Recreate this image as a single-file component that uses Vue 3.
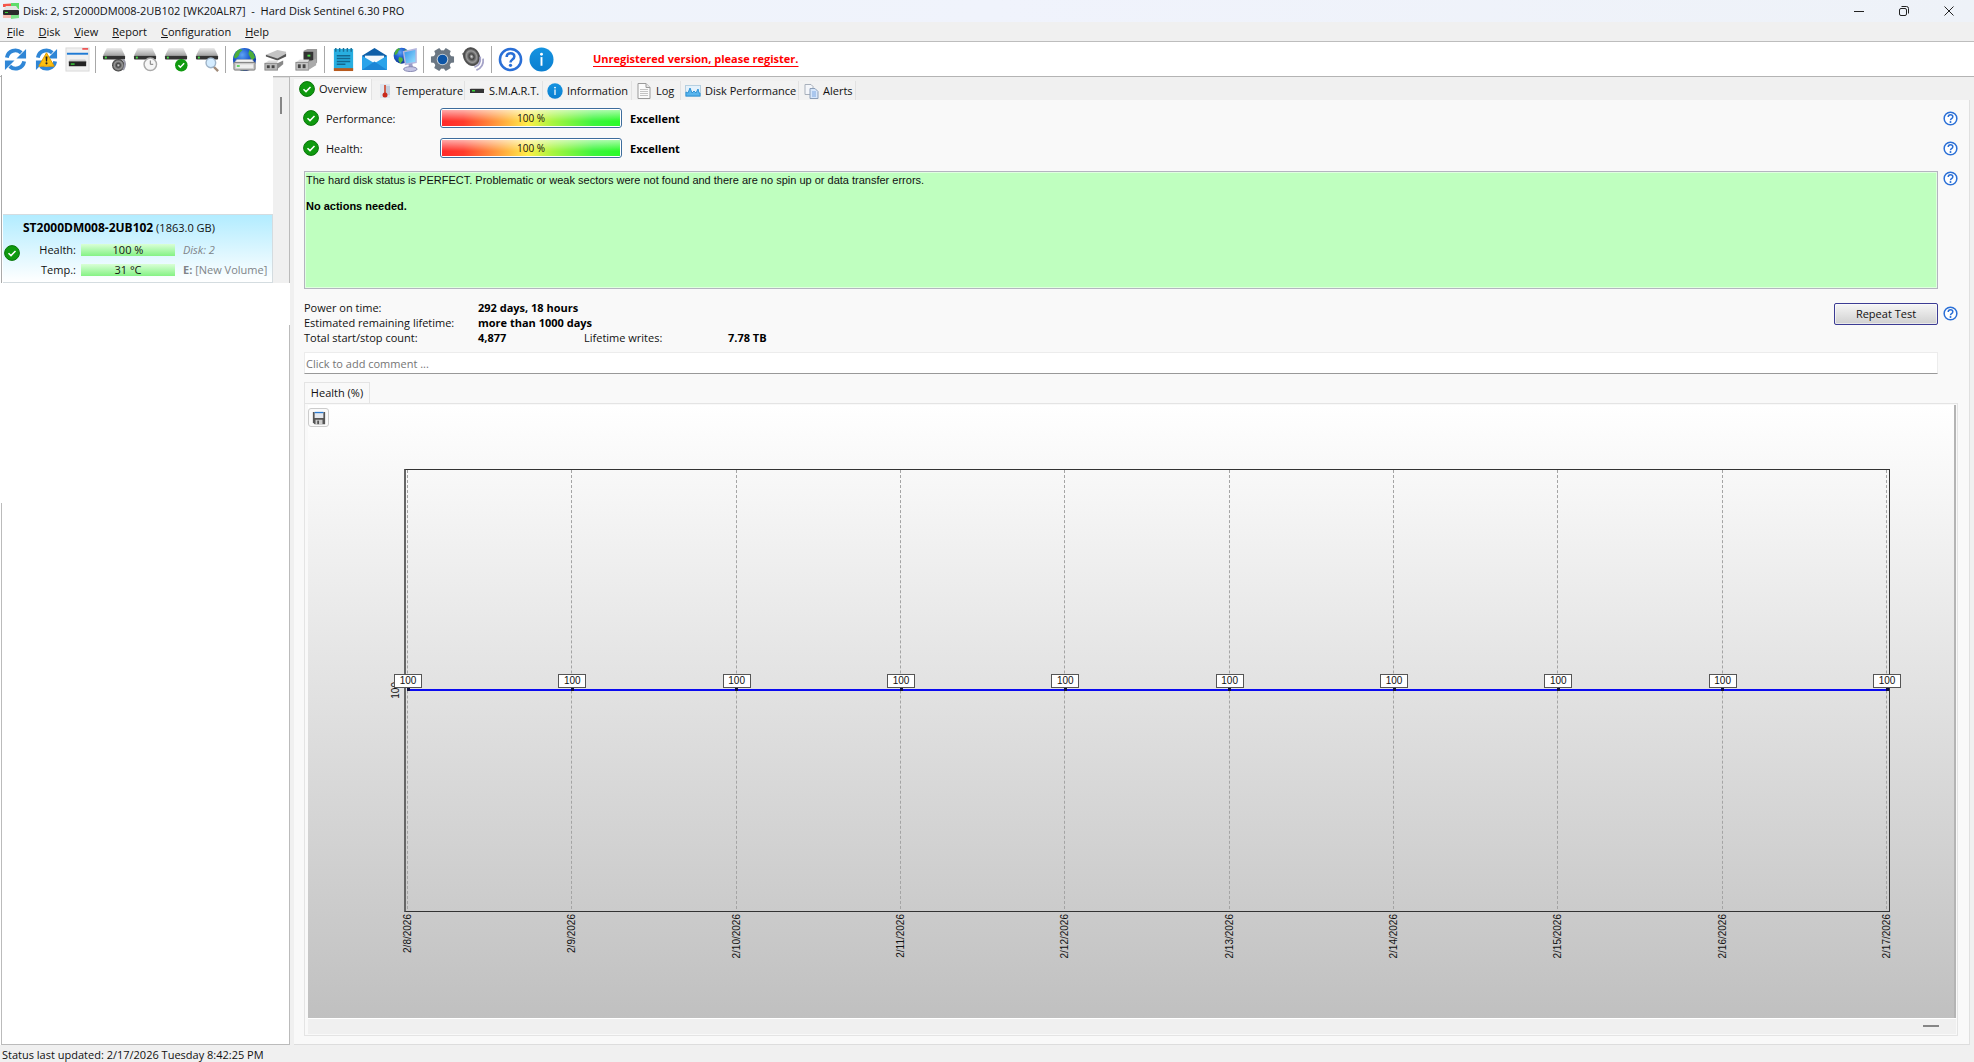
<script setup>
import { ref } from 'vue'

const menus = ['File', 'Disk', 'View', 'Report', 'Configuration', 'Help']

const toolGroups = [
  [['refresh', 'Refresh'], ['refresh-warn', 'Refresh all'], ['panel', 'Disk panel']],
  [['disk-sound', 'Acoustic'], ['disk-clock', 'Short test'], ['disk-ok', 'Extended test'], ['disk-find', 'Surface test']],
  [['disk-web', 'Online'], ['plug', 'Connect'], ['plug-disk', 'Remove']],
  [['notes', 'Report'], ['mail', 'Send'], ['network', 'Network']],
  [['gear', 'Configuration'], ['speaker', 'Sounds']],
  [['help', 'Help'], ['info', 'About']],
]

const tabs = [
  { icon: 'ok', label: 'Overview' },
  { icon: 'thermo', label: 'Temperature' },
  { icon: 'drive', label: 'S.M.A.R.T.' },
  { icon: 'info', label: 'Information' },
  { icon: 'page', label: 'Log' },
  { icon: 'graph', label: 'Disk Performance' },
  { icon: 'pages', label: 'Alerts' },
]
const activeTab = ref('Overview')

const ratings = ['Performance:', 'Health:']
const comment = ref('')

const firstDay = 8
const points = Array.from({ length: 10 }, (_, i) => ({
  date: `2/${firstDay + i}/2026`,
  value: 100,
  left: (i / 9) * 100 + '%',
}))
</script>

<template>
  <svg class="defs" aria-hidden="true">
    <defs>
      <linearGradient id="gDrive" x1="0" y1="0" x2="0" y2="1">
        <stop offset="0" stop-color="#ececec" /><stop offset="1" stop-color="#a2a2a2" />
      </linearGradient>
      <linearGradient id="gBlue" x1="0" y1="0" x2="0" y2="1">
        <stop offset="0" stop-color="#1593e0" /><stop offset="1" stop-color="#0b7fd0" />
      </linearGradient>
      <radialGradient id="gGlobe" cx=".4" cy=".3" r=".8">
        <stop offset="0" stop-color="#5fa4f4" /><stop offset=".4" stop-color="#1f5fd0" /><stop offset="1" stop-color="#0c2f86" />
      </radialGradient>
      <linearGradient id="gScreen" x1="0" y1="0" x2="1" y2="1">
        <stop offset="0" stop-color="#2f8fe8" /><stop offset="1" stop-color="#9be4ff" />
      </linearGradient>
      <radialGradient id="gCone">
        <stop offset="0" stop-color="#ddd" /><stop offset=".3" stop-color="#444" /><stop offset=".65" stop-color="#999" /><stop offset="1" stop-color="#2b2b2b" />
      </radialGradient>
    </defs>

    <symbol id="i-app" viewBox="0 0 16 16">
      <path d="M0 1l16-1v4H0z" fill="#f4564a" /><path d="M8 0h8v6H8z" fill="#5fdc6a" />
      <path d="M0 12h9l-1 3H0z" fill="#f9b9b0" /><path d="M8 12h8v3l-8 1z" fill="#7fe58a" />
      <path d="M3 3h10l3 4H0z" fill="#e4e4e4" /><rect y="7" width="16" height="5" rx="1" fill="#2b2b2b" />
      <rect x="2" y="9" width="3" height="1" fill="#3ad23a" />
    </symbol>
    <symbol id="i-arrows" viewBox="0 0 26 26">
      <g fill="none" stroke="#2f86d6" stroke-width="4">
        <path d="M4 11a9 9 0 0 1 15-5" /><path d="M22 15a9 9 0 0 1-15 5" />
      </g>
      <path d="M24 2v10H14z" fill="#2f86d6" /><path d="M2 24V14h10z" fill="#2f86d6" />
    </symbol>
    <symbol id="i-refresh" viewBox="0 0 26 26"><use href="#i-arrows" /></symbol>
    <symbol id="i-refresh-warn" viewBox="0 0 26 26">
      <use href="#i-arrows" />
      <path d="M13 6l8 14H5z" fill="#fdc00f" stroke="#e39a00" stroke-linejoin="round" />
      <path d="M12 10h2l-.4 5h-1.2z" fill="#222" /><circle cx="13" cy="17" r="1.1" fill="#222" />
    </symbol>
    <symbol id="i-panel" viewBox="0 0 26 26">
      <rect x="1" y="1" width="24" height="24" fill="#f0f0f0" stroke="#d8d8d8" />
      <path d="M18 2h6" stroke="#e33" stroke-width="1.5" /><rect x="2" y="6" width="22" height="2" fill="#1e7ad4" />
      <path d="M5 13h16l2 3H3z" fill="#ccc" /><rect x="4" y="15" width="18" height="5" fill="#222" />
      <rect x="6" y="17" width="4" height="1.500" fill="#3ad23a" />
    </symbol>
    <symbol id="i-hdd" viewBox="0 0 26 26">
      <path d="M5 1h15l4 8H1z" fill="url(#gDrive)" /><rect x="1" y="9" width="23" height="4" rx="1" fill="#333" />
      <rect x="3" y="10" width="2" height="2" fill="#4be04b" />
    </symbol>
    <symbol id="i-disk-sound" viewBox="0 0 26 26">
      <use href="#i-hdd" width="26" height="26" /><circle cx="17" cy="19" r="6.500" fill="url(#gCone)" /><path d="M22 13q4 4 0 11" stroke="#999aa8" stroke-width="2" fill="none" />
    </symbol>
    <symbol id="i-disk-clock" viewBox="0 0 26 26">
      <use href="#i-hdd" width="26" height="26" /><circle cx="18" cy="18" r="6.500" fill="#f6f6f6" stroke="#aaa" stroke-width="1.500" /><path d="M18 14v4h3" stroke="#777" fill="none" />
    </symbol>
    <symbol id="i-disk-ok" viewBox="0 0 26 26">
      <use href="#i-hdd" width="26" height="26" /><circle cx="18" cy="19" r="6.500" fill="#109a10" /><path d="M15 19l2 2 4-4" stroke="#fff" stroke-width="1.500" fill="none" />
    </symbol>
    <symbol id="i-disk-find" viewBox="0 0 26 26">
      <use href="#i-hdd" width="26" height="26" /><path d="M19 20l5 5" stroke="#a08a78" stroke-width="2.500" /><circle cx="16.500" cy="16.500" r="5" fill="#d4ecff" stroke="#9fb4c8" stroke-width="1.500" />
    </symbol>
    <symbol id="i-globe" viewBox="0 0 26 26">
      <circle cx="13" cy="13" r="12" fill="url(#gGlobe)" />
      <path d="M3 7q2-4 5-5l3 1-3 3-1 3-3 3-2-1zM18 3l4 3 2 5-3 3-2-3-2-4z" fill="#4cae3a" /><path d="M9 15l5 1 1 4-4 5-3-5z" fill="#58b83c" />
    </symbol>
    <symbol id="i-disk-web" viewBox="0 0 26 26">
      <use href="#i-globe" width="26" height="26" /><path d="M5 13h16l3 4H2z" fill="#f2f2f2" stroke="#aaa" stroke-width=".5" /><rect x="2" y="16" width="22" height="8" rx="1" fill="#c8c8c8" stroke="#777" />
      <rect x="4" y="18" width="18" height="4" fill="#eee" /><rect x="5" y="19" width="3" height="1.500" fill="#3c3" />
    </symbol>
    <symbol id="i-plug" viewBox="0 0 26 26">
      <path d="M3 8l12-5 9 2v4l-9 4z" fill="#c4c4c4" /><path d="M3 8l12 4 9-5v3l-9 4-12-4z" fill="#555" />
      <path d="M2 17l4-3h10l-2 3z" fill="#ddd" /><rect x="2" y="17" width="13" height="7" fill="#bbb" stroke="#888" />
      <rect x="4" y="19" width="3" height="3" fill="#444" /><rect x="9" y="19" width="3" height="3" fill="#444" /><path d="M15 17l6-3v4l-6 5z" fill="#888" />
    </symbol>
    <symbol id="i-plug-disk" viewBox="0 0 26 26">
      <path d="M10 4l4-2h10v14l-4 4H10z" fill="#9a9a9a" /><rect x="10" y="5" width="10" height="9" fill="#333" /><rect x="14" y="8" width="3" height="2" fill="#4be04b" />
      <path d="M2 16l4-3h10l-2 3z" fill="#ddd" /><rect x="2" y="16" width="13" height="8" fill="#c4c4c4" stroke="#888" />
      <rect x="4" y="18" width="3" height="4" fill="#444" /><rect x="9" y="18" width="3" height="4" fill="#444" /><path d="M15 16l8-4v7l-8 5z" fill="#aaa" />
    </symbol>
    <symbol id="i-notes" viewBox="0 0 26 26">
      <rect x="3" y="2" width="20" height="22" fill="#28aee0" /><rect x="3" y="22" width="20" height="3" fill="#b85a1e" />
      <path d="M5 1v4M9 1v4M13 1v4M17 1v4M21 1v4" stroke="#1b6f96" stroke-width="1.500" />
      <path d="M6 9h14M6 12h14M6 15h14M6 18h9" stroke="#13678f" stroke-width="1.500" />
    </symbol>
    <symbol id="i-mail" viewBox="0 0 26 26">
      <path d="M0 9l13-8 13 8v3H0z" fill="#0f5fa8" /><path d="M3 9h20v8H3z" fill="#f3f8fc" />
      <path d="M0 9l13 8 13-8v15H0z" fill="#2aa3ea" /><path d="M0 24l13-9 13 9z" fill="#1b86d6" />
    </symbol>
    <symbol id="i-network" viewBox="0 0 26 26">
      <use href="#i-globe" width="18" height="18" />
      <path d="M11 5l13-3v14l-11 2z" fill="url(#gScreen)" stroke="#b4b6de" stroke-width="1.500" />
      <path d="M16 18l4-1 1 5-4 1z" fill="#9a9cc8" /><ellipse cx="18" cy="23" rx="7" ry="2.500" fill="#c4c4e4" stroke="#8486b0" />
    </symbol>
    <symbol id="i-gear" viewBox="0 0 26 26">
      <g fill="#6b7783"><circle cx="13" cy="13" r="9.500" />
        <g v-for="a in [30, 90, 150, 210, 270, 330]" :key="a"><path :transform="`rotate(${a} 13 13)`" d="M10 1h6l1 6H9z" /></g>
      </g>
      <circle cx="13" cy="13" r="6" fill="#c8d2da" /><circle cx="13" cy="13" r="5" fill="#0d55a6" />
    </symbol>
    <symbol id="i-speaker" viewBox="0 0 26 26">
      <path d="M1 7l8-6 4 12-8 1z" fill="#777" /><ellipse cx="11" cy="10" rx="8" ry="9.500" fill="url(#gCone)" stroke="#555" transform="rotate(-25 11 10)" />
      <path d="M14 21q7-2 6-11M16 24q8-3 7-12" stroke="#a5a3c8" stroke-width="1.800" fill="none" />
    </symbol>
    <symbol id="i-help" viewBox="0 0 26 26">
      <circle cx="13" cy="13" r="11" fill="#fff" stroke="#2a6fd6" stroke-width="2.600" />
      <path d="M9 10.500q0-4 4-4t4 3.500q0 2-2.200 3.200Q13 14.300 13 16" stroke="#2a6fd6" stroke-width="2.600" fill="none" /><circle cx="13" cy="19" r="1.700" fill="#2a6fd6" />
    </symbol>
    <symbol id="i-info" viewBox="0 0 26 26">
      <circle cx="13" cy="13" r="12.500" fill="url(#gBlue)" /><rect x="12" y="10.500" width="2" height="9" fill="#fff" /><circle cx="13" cy="7.500" r="1.500" fill="#fff" />
    </symbol>
    <symbol id="i-ok" viewBox="0 0 16 16">
      <circle cx="8" cy="8" r="7.400" fill="#0f9a0f" stroke="#0a750a" /><path d="M4.500 8.200l2.500 2.400 4.500-4.600" stroke="#fff" stroke-width="1.500" fill="none" />
    </symbol>
    <symbol id="i-thermo" viewBox="0 0 16 16">
      <rect x="4" y="1" width="10" height="14" fill="#dfe5ee" /><path d="M11 3v9M13 3v9" stroke="#a7b6cc" />
      <rect x="8" y="2" width="2" height="10" fill="#d0604c" /><circle cx="9" cy="12" r="2.500" fill="#c8281c" />
    </symbol>
    <symbol id="i-drive" viewBox="0 0 16 16">
      <path d="M2 5h12l2 2H0z" fill="#c4c4c4" /><rect x="1" y="6" width="14" height="4" fill="#333" /><rect x="3" y="7" width="3" height="1.500" fill="#3ad23a" />
    </symbol>
    <symbol id="i-page" viewBox="0 0 16 16">
      <path d="M2 .5h8l4 4v11H2z" fill="#fbfbfb" stroke="#9a9a9a" /><path d="M10 .5v4h4" fill="#e4e4e4" stroke="#9a9a9a" />
      <path d="M4 6.500h8M4 8.500h8M4 10.500h8M4 12.500h8" stroke="#c4c4c4" />
    </symbol>
    <symbol id="i-graph" viewBox="0 0 16 16">
      <rect x=".5" y="2.500" width="15" height="11" fill="#e4f1fb" stroke="#b5cfe0" />
      <path d="M1 13V9l2 1 2-5 2 5 2-2 2 2 2-4 1 4 1 0v3z" fill="#58b4ec" stroke="#2f93d6" />
    </symbol>
    <symbol id="i-pages" viewBox="0 0 16 16">
      <path d="M2 1.500h6l2 2v8H2z" fill="#f4f6fa" stroke="#a8b0bb" /><path d="M7 5.500h5l3 3v7H7z" fill="#d6e6fb" stroke="#8c9fb8" /><path d="M9 9h4M9 11h4M9 13h4" stroke="#7fa8e0" />
    </symbol>
    <symbol id="i-save" viewBox="0 0 16 16">
      <path d="M1 1h14v14H3l-2-2z" fill="#555" /><rect x="3" y="1" width="10" height="7" fill="#e4e8ee" /><rect x="3" y="1" width="10" height="1.500" fill="#2a7ad0" />
      <rect x="4" y="10" width="8" height="5" fill="#ccc" /><rect x="6" y="11" width="2" height="4" fill="#555" />
    </symbol>
  </svg>

  <div class="window">
    <header class="titlebar">
      <svg class="app-icon"><use href="#i-app" /></svg>
      <h1>Disk: 2, ST2000DM008-2UB102 [WK20ALR7]&nbsp; -&nbsp; Hard Disk Sentinel 6.30 PRO</h1>
      <button aria-label="Minimize"><svg viewBox="0 0 10 10"><path d="M0 5.500h10" /></svg></button>
      <button aria-label="Restore"><svg viewBox="0 0 10 10"><rect x=".5" y="2.500" width="7" height="7" rx="1.500" /><path d="M2.500 .5h5a2 2 0 0 1 2 2v5" /></svg></button>
      <button aria-label="Close"><svg viewBox="0 0 10 10"><path d="M.5 .5l9 9M9.500 .5l-9 9" /></svg></button>
    </header>

    <nav class="menubar">
      <button v-for="m in menus" :key="m"><u>{{ m[0] }}</u>{{ m.slice(1) }}</button>
    </nav>

    <div class="toolbar">
      <div v-for="(group, g) in toolGroups" :key="g" class="group">
        <button v-for="[icon, label] in group" :key="icon" :aria-label="label"><svg><use :href="`#i-${icon}`" /></svg></button>
      </div>
      <a class="register" href="#register">Unregistered version, please register.</a>
    </div>

    <div class="body">
      <aside class="sidebar">
        <div class="scroller">
          <div class="drives">
            <div class="drive">
              <svg class="i16"><use href="#i-ok" /></svg>
              <div class="drive-name"><b>ST2000DM008-2UB102</b> (1863.0 GB)</div>
              <span class="key">Health:</span><span class="meter">100 %</span><i>Disk: 2</i>
              <span class="key">Temp.:</span><span class="meter">31 °C</span><span class="volume"><b>E:</b> [New Volume]</span>
            </div>
          </div>
          <div class="track"><div class="thumb"></div></div>
        </div>
        <div class="gap"></div>
        <div class="blank"></div>
        <div class="empty"></div>
      </aside>

      <main>
        <div class="tabs" role="tablist">
          <button v-for="t in tabs" :key="t.label" role="tab" :class="{ active: t.label === activeTab }" @click="activeTab = t.label">
            <svg class="i16"><use :href="`#i-${t.icon}`" /></svg><span>{{ t.label }}</span>
          </button>
        </div>

        <section class="panel">
          <div v-for="r in ratings" :key="r" class="rating">
            <svg class="i16"><use href="#i-ok" /></svg>
            <span class="rating-name">{{ r }}</span>
            <span class="spectrum"><span>100 %</span></span>
            <b>Excellent</b>
            <button class="hint" aria-label="Help"><svg><use href="#i-help" /></svg></button>
          </div>

          <div class="status-row">
            <div class="status">
              <p>The hard disk status is PERFECT. Problematic or weak sectors were not found and there are no spin up or data transfer errors.</p>
              <p><b>No actions needed.</b></p>
            </div>
            <button class="hint" aria-label="Help"><svg><use href="#i-help" /></svg></button>
          </div>

          <div class="facts-row">
            <div class="facts">
              <span>Power on time:</span><b class="wide">292 days, 18 hours</b>
              <span>Estimated remaining lifetime:</span><b class="wide">more than 1000 days</b>
              <span>Total start/stop count:</span><b>4,877</b><span>Lifetime writes:</span><b>7.78 TB</b>
            </div>
            <button class="repeat">Repeat Test</button>
            <button class="hint" aria-label="Help"><svg><use href="#i-help" /></svg></button>
          </div>

          <input v-model="comment" class="comment" type="text" aria-label="Comment" placeholder="Click to add comment ..." />

          <div class="chart-tabs"><button>Health (%)</button></div>
          <div class="chart-frame">
            <div class="chart">
              <button class="save" aria-label="Save chart"><svg><use href="#i-save" /></svg></button>
              <div class="plot">
                <span class="y-label">100</span>
                <div class="series">
                  <div class="line"></div>
                  <div v-for="p in points" :key="p.date" class="day" :style="{ left: p.left }">
                    <span class="dot"></span>
                    <span class="value">{{ p.value }}</span>
                    <span class="date">{{ p.date }}</span>
                  </div>
                </div>
              </div>
            </div>
            <div class="hscroll"><div class="hthumb"></div></div>
          </div>
        </section>
      </main>
    </div>

    <footer>Status last updated: 2/17/2026 Tuesday 8:42:25 PM</footer>
  </div>
</template>

<style>
body { background: #f0f0f0; }
</style>

<style scoped>
* { box-sizing: border-box; }
.defs { position: absolute; width: 0; height: 0; }
.window {
  display: flex; flex-direction: column; min-height: 100vh;
  font: 11px/16px "Open Sans", "Noto Sans", sans-serif; color: #111; background: #f0f0f0;
}
button { font: inherit; color: inherit; border: 0; padding: 0; background: none; display: flex; align-items: center; }
svg { display: block; flex: none; }
b { color: #000; }
.i16 { width: 16px; height: 16px; }

.titlebar { display: flex; align-items: center; height: 22px; padding: 0 3px; background: linear-gradient(90deg, #eef3f9, #f0f3fc 50%, #eef2f8); }
.app-icon { width: 16px; height: 16px; }
h1 { flex: 1; margin: 0 0 0 4px; font-size: 11px; font-weight: 400; }
.titlebar button { width: 45px; height: 22px; justify-content: center; }
.titlebar button svg { width: 10px; height: 10px; fill: none; stroke: #222; }

.menubar { display: flex; gap: 14px; height: 20px; padding: 0 7px; border-bottom: 1px solid #bdbdbd; }

.toolbar { display: flex; align-items: center; height: 35px; background: #fff; border-bottom: 1px solid #b4b4b4; }
.group { display: flex; }
.group + .group { border-left: 1px solid #a8a8a8; margin-left: 2px; padding-left: 3px; }
.group button { width: 31px; height: 27px; justify-content: center; }
.group svg { width: 25px; height: 25px; }
.register { margin-left: 36px; color: #f00; font-weight: 700; text-underline-offset: 3px; }

.body { flex: 1; display: flex; }
.sidebar { width: 290px; flex: none; display: flex; flex-direction: column; padding-left: 1px; background: #fff; }
.scroller { display: flex; height: 206px; border-right: 1px solid #bbb; }
.drives { position: relative; flex: 1; min-width: 0; display: flex; align-items: flex-end; margin-top: -2px; padding-left: 1px; background: #fff; border-left: 1px solid #aaa; }
.track { flex: none; width: 16px; padding: 19px 7px; background: #f0f0f0; border-top: 1px solid #ddd; }
.thumb { width: 2px; height: 17px; background: #868686; }
.drive {
  flex: 1; display: grid; grid-template-columns: 20px 48px 94px 1fr; column-gap: 5px; grid-template-rows: 23px 21px 19px; align-items: center;
  height: 69px; padding: 1px 0; border: 1px solid #d4dce0; border-left: 0; background: linear-gradient(#b2ecff, #fff);
  grid-template-areas: "n n n n" "i a b c" "i d e f"; white-space: nowrap;
}
.drive .i16 { grid-area: i; align-self: start; margin: 6px 0 0 1px; }
.drive-name { grid-area: n; padding-left: 20px; }
.drive-name b { font-size: 12px; }
.key { text-align: right; }
.meter { height: 12px; line-height: 12px; text-align: center; background: linear-gradient(#d9ffd6, #85f285); }
.drive i, .volume { padding-left: 3px; }
.drive i, .volume, .volume b { color: #808488; }
.gap { height: 42px; }
.blank { height: 178px; border-right: 1px solid #bbb; }
.empty { flex: 1; border: 1px solid #bbb; border-top: 0; }

main { flex: 1; min-width: 0; display: flex; flex-direction: column; padding: 2px 4px 0 4px; }
.tabs { display: grid; grid-template-columns: 78px 93px 78px 89px 49px 118px 57px; height: 21px; align-items: end; }
.tabs button { height: 19px; gap: 4px; padding-left: 4px; border-right: 1px solid #e2e2e2; background: #f2f2f2; white-space: nowrap; }
.tabs .active { height: 21px; padding: 0 0 2px 5px; background: #f9f9f9; }
.panel { flex: 1; display: flex; flex-direction: column; padding: 3px 11px 8px 10px; background: #f9f9f9; border-right: 1px solid #e0e0e0; border-bottom: 1px solid #ddd; }

.rating { display: flex; align-items: center; height: 30px; }
.rating-name { width: 113px; margin-left: 7px; }
.rating-name, .rating b { padding-top: 2px; }
.rating .i16 { margin-left: -1px; }
.spectrum {
  width: 182px; height: 20px; margin: 0 8px 0 1px; padding: 1px; border: 1px solid #3d6c9c; border-radius: 3px; background: #fff;
}
.spectrum span {
  display: block; height: 16px; line-height: 16px; text-align: center; font-size: 10px;
  background: linear-gradient(#fff9, #fff0 70%), linear-gradient(90deg, #ff2a2a, #ff3c2c 12%, #ffee4a 48%, #a8f540 62%, #3df53d 85%, #28fb28);
}
.hint { width: 15px; height: 15px; margin-left: auto; }
.hint svg { width: 15px; height: 15px; }

.status-row { display: flex; margin-top: 8px; }
.status { flex: 1; height: 118px; margin-right: 5px; padding: 2px 1px; border: 1px solid #b4b4c0; background: #bfffbf; box-shadow: inset 0 0 0 1px #e0ffe0; font: 11px/13px "Liberation Sans", Arial, sans-serif; }
.status p { margin: 0 0 13px; }

.facts-row { display: flex; align-items: flex-start; margin-top: 11px; }
.facts { display: grid; grid-template-columns: 174px 106px 144px auto; line-height: 15px; white-space: nowrap; }
.wide { grid-column: span 3; }
.repeat { width: 104px; height: 22px; margin: 3px 5px 0 auto; justify-content: center; border: 1px solid #3c3c94; border-radius: 2px; background: linear-gradient(#f6f6f6, #d0d0d0); box-shadow: inset 0 0 0 1px #fff8; }
.repeat + .hint { margin: 6px 0 0; }
.comment { height: 22px; margin: 7px 20px 0 0; padding: 0 1px; font: inherit; background: #fff; border: 1px solid #ececec; border-bottom: 1px solid #999; }
.comment::placeholder { color: #757575; opacity: 1; }

.chart-tabs { display: flex; margin-top: 8px; }
.chart-tabs button { width: 66px; height: 21px; justify-content: center; border: 1px solid #e4e4e4; border-bottom: 0; }
.chart-frame { flex: 1; display: flex; flex-direction: column; padding: 1px 1px 1px 3px; border: 1px solid #e4e4e4; }
.chart { flex: 1; display: flex; flex-direction: column; padding: 3px 64px 106px 0; border-right: 2px solid #b4b4b4; background: linear-gradient(#fff, #c0c0c0); }
.save { width: 21px; height: 19px; justify-content: center; border: 1px solid #ccc; border-radius: 3px; background: #fafafa; }
.save svg { width: 14px; height: 14px; }
.plot { flex: 1; display: flex; align-items: center; margin: 42px 0 0 96px; min-height: 300px; position: relative; border: 1px solid #333; border-left: 2px solid #666; }
.y-label { position: absolute; left: -16px; writing-mode: vertical-rl; transform: rotate(180deg); font: 10px/12px "Liberation Sans", Arial, sans-serif; }
.series { flex: 1; align-self: stretch; position: relative; margin: 0 3px 2px 1px; }
.line { position: absolute; left: 0; right: 0; top: 50%; height: 2px; margin-top: -1px; background: #0a0af0; }
.day { position: absolute; top: 0; bottom: 0; width: 0; display: flex; justify-content: center; align-items: center; border-left: 1px dashed #a4a4a4; font: 10px/12px "Liberation Sans", Arial, sans-serif; }
.dot { position: absolute; width: 3px; height: 3px; background: #114; }
.value { position: absolute; bottom: 50%; width: 28px; margin-bottom: 2px; text-align: center; background: #fff; border: 1px solid #555; }
.date { position: absolute; top: 100%; margin-top: 5px; writing-mode: vertical-rl; transform: rotate(180deg); }
.hscroll { height: 16px; padding: 6px 17px; border-top: 1px solid #fff; background: #f0f0f0; }
.hthumb { width: 16px; height: 2px; margin-left: auto; background: #868686; }

footer { height: 17px; padding-left: 2px; line-height: 20px; overflow: hidden; }
</style>
